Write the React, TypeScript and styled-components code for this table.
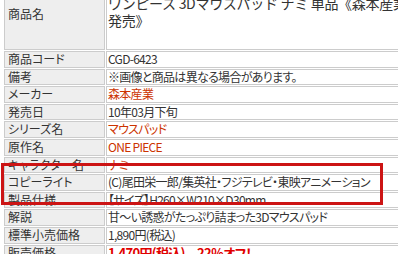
import React from "react";
import styled, { createGlobalStyle } from "styled-components";

const Global = createGlobalStyle`
  html, body {
    margin: 0;
    padding: 0;
    background: #ffffff;
    overflow: hidden;
  }
  body {
    font-family: "Noto Sans CJK JP", "Noto Sans", sans-serif;
    color: #333333;
  }
`;

const Page = styled.div`
  position: relative;
  width: 398px;
  height: 254px;
  overflow: hidden;
`;

const Table = styled.table`
  margin: -23px 0 0 3px;
  border-collapse: separate;
  border-spacing: 1px;
  width: 480px;
  font-size: 12px;
`;

const Label = styled.th<{ $tall?: boolean }>`
  width: 96px;
  padding: 0 0 0 3px;
  height: ${(p) => (p.$tall ? "70px" : "14.6px")};
  line-height: 14.6px;
  background: #eeeeee;
  border: 1px solid #cccccc;
  font-weight: normal;
  text-align: left;
  vertical-align: middle;
  white-space: nowrap;
  color: #333333;
  font-feature-settings: "palt";
`;

const Value = styled.td<{ $tone?: "maker" | "price" }>`
  padding: 0 0 0 1px;
  height: 14.6px;
  line-height: 14.6px;
  border: 1px solid #cccccc;
  vertical-align: middle;
  white-space: nowrap;
  font-feature-settings: "palt";
  letter-spacing: -0.7px;
  color: ${(p) =>
    p.$tone === "maker" ? "#cc3300" : p.$tone === "price" ? "#e00000" : "#333333"};
  font-weight: ${(p) => (p.$tone === "price" ? "bold" : "normal")};
  font-size: ${(p) => (p.$tone === "price" ? "13px" : "12px")};
`;

const Title = styled.td`
  padding: 0 0 4px 1px;
  border: 1px solid #cccccc;
  vertical-align: middle;
  font-size: 14px;
  line-height: 17px;
  letter-spacing: -0.3px;
  white-space: nowrap;
  color: #333333;
`;

const Highlight = styled.div`
  position: absolute;
  left: 1px;
  top: 163px;
  width: 376px;
  height: 36px;
  border: 3px solid #cc1414;
  pointer-events: none;
`;

type Row = { label: string; value: string; tone?: "maker" | "price" };

const rows: Row[] = [
  { label: "商品コード", value: "CGD-6423" },
  { label: "備考", value: "※画像と商品は異なる場合があります。" },
  { label: "メーカー", value: "森本産業", tone: "maker" },
  { label: "発売日", value: "10年03月下旬" },
  { label: "シリーズ名", value: "マウスパッド", tone: "maker" },
  { label: "原作名", value: "ONE PIECE", tone: "maker" },
  { label: "キャラクター名", value: "ナミ", tone: "maker" },
  { label: "コピーライト", value: "(C)尾田栄一郎/集英社・フジテレビ・東映アニメーション" },
  { label: "製品仕様", value: "【サイズ】H260×W210×D30mm" },
  { label: "解説", value: "甘～い誘惑がたっぷり詰まった3Dマウスパッド" },
  { label: "標準小売価格", value: "1,890円(税込)" },
  { label: "販売価格", value: "1,470円(税込)　22％オフ！", tone: "price" },
];

export default function App() {
  return (
    <Page>
      <Global />
      <Table>
        <tbody>
          <tr>
            <Label $tall>商品名</Label>
            <Title>
              ワンピース 3Dマウスパッド ナミ 単品《森本産業
              <br />
              発売》
            </Title>
          </tr>
          {rows.map((r) => (
            <tr key={r.label}>
              <Label>{r.label}</Label>
              <Value $tone={r.tone}>{r.value}</Value>
            </tr>
          ))}
        </tbody>
      </Table>
      <Highlight />
    </Page>
  );
}
